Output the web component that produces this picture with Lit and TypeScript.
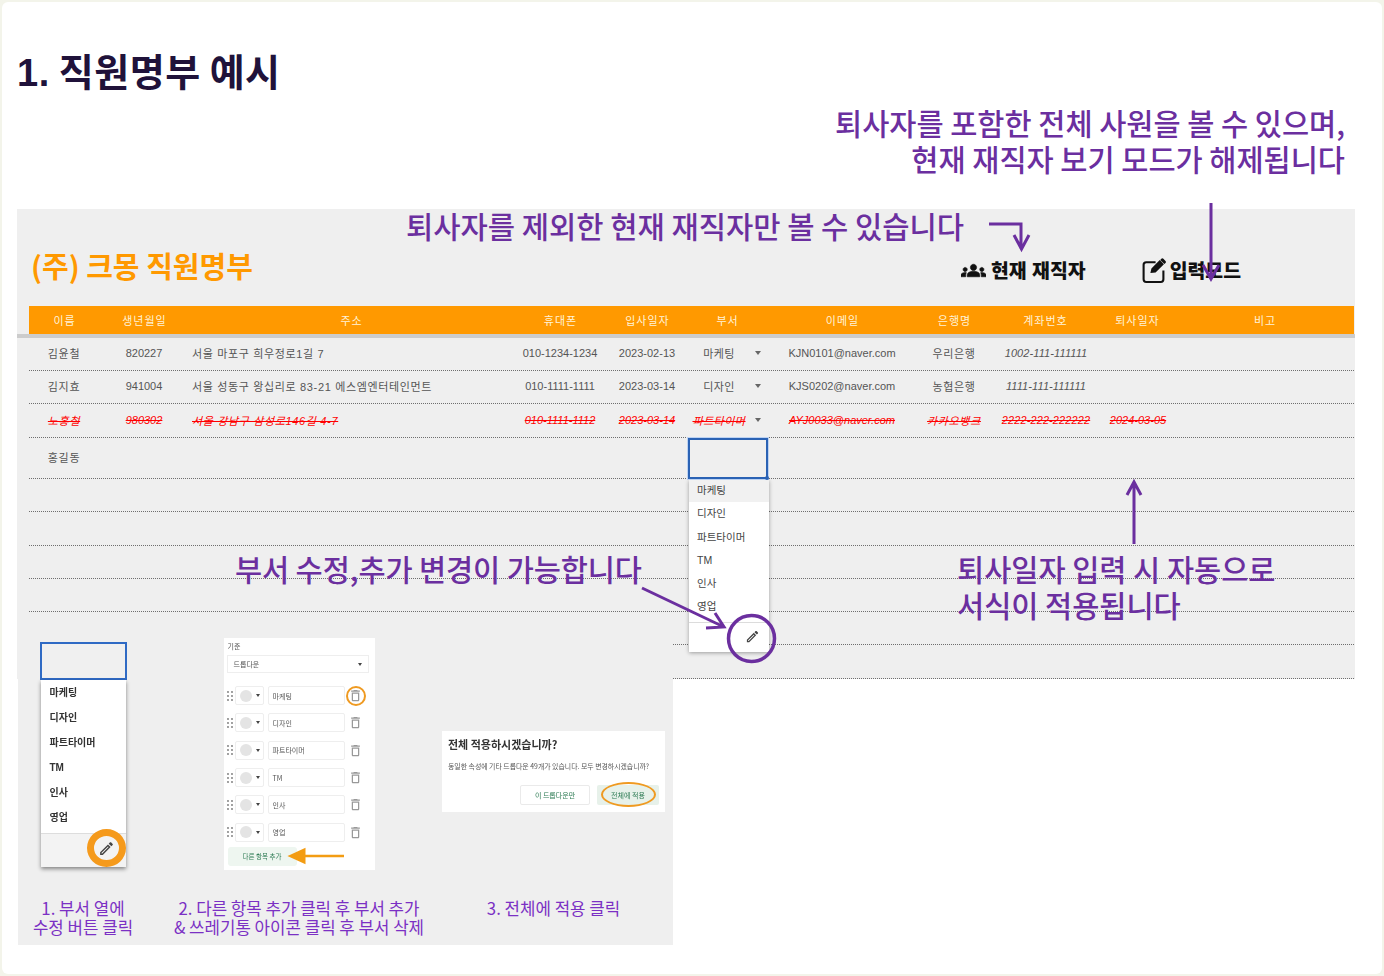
import { LitElement, html, css, svg } from "lit";
import { customElement } from "lit/decorators.js";

const COLS = ["이름", "생년월일", "주소", "휴대폰", "입사일자", "부서", "이메일", "은행명", "계좌번호", "퇴사일자", "비고"];

interface Row { h: number; cells?: string[]; gone?: boolean; name?: string; }
const ROWS: Row[] = [
  { h: 33, cells: ["김윤철", "820227", "서울 마포구 희우정로1길 7", "010-1234-1234", "2023-02-13", "마케팅", "KJN0101@naver.com", "우리은행", "1002-111-111111", ""] },
  { h: 33, cells: ["김지효", "941004", "서울 성동구 왕십리로 83-21 에스엠엔터테인먼트", "010-1111-1111", "2023-03-14", "디자인", "KJS0202@naver.com", "농협은행", "1111-111-111111", ""] },
  { h: 34, gone: true, cells: ["노홍철", "980302", "서울 강남구 삼성로146길 4-7", "010-1111-1112", "2023-03-14", "파트타이머", "AYJ0033@naver.com", "카카오뱅크", "2222-222-222222", "2024-03-05"] },
  { h: 41, name: "홍길동" },
  { h: 33 }, { h: 34 }, { h: 33 }, { h: 33 }, { h: 33 }, { h: 34 },
];
const DEPTS = ["마케팅", "디자인", "파트타이머", "TM", "인사", "영업"];

const PENCIL = "M3 17.25V21h3.75L17.81 9.94l-3.75-3.75L3 17.25zM5.92 19H5v-.92l9.06-9.06.92.92L5.92 19zM20.71 7.04c.39-.39.39-1.02 0-1.41l-2.34-2.34c-.2-.2-.45-.29-.71-.29s-.51.1-.7.29l-1.83 1.83 3.75 3.75 1.83-1.83z";
const TRASH = "M16 9v10H8V9h8m-1.5-6h-5l-1 1H5v2h14V4h-3.5l-1-1zM18 7H6v12c0 1.1.9 2 2 2h8c1.1 0 2-.9 2-2V7z";
const GROUPS = "M12 12.75c1.63 0 3.07.39 4.24.9 1.08.48 1.76 1.56 1.76 2.73V18H6v-1.61c0-1.18.68-2.26 1.76-2.73 1.17-.52 2.61-.91 4.24-.91zM4 13c1.1 0 2-.9 2-2s-.9-2-2-2-2 .9-2 2 .9 2 2 2zm1.13 1.1c-.37-.06-.74-.1-1.13-.1-.99 0-1.93.21-2.78.58C.48 14.9 0 15.62 0 16.43V18h4.5v-1.61c0-.83.23-1.61.63-2.29zM20 13c1.1 0 2-.9 2-2s-.9-2-2-2-2 .9-2 2 .9 2 2 2zm4 3.43c0-.81-.48-1.53-1.22-1.85-.85-.37-1.79-.58-2.78-.58-.39 0-.76.04-1.13.1.4.68.63 1.46.63 2.29V18H24v-1.57zM12 6c1.66 0 3 1.34 3 3s-1.34 3-3 3-3-1.34-3-3 1.34-3 3-3z";

const pencil = (cls: string) => html`<svg class=${cls} viewBox="0 0 24 24"><path d=${PENCIL}></path></svg>`;
const trash = html`<svg class="trash" viewBox="0 0 24 24"><path d=${TRASH}></path></svg>`;
const grip = html`<svg class="grip" viewBox="0 0 6 10"><g>${[1, 5, 9].flatMap((y) => [1, 5].map((x) => svg`<circle cx=${x} cy=${y} r="0.9"></circle>`))}</g></svg>`;

@customElement("app-root")
export class AppRoot extends LitElement {
  static styles = css`
    :host { display: block; width: 1384px; height: 976px; overflow: hidden; background: #f3f4ea;
      font-family: "Liberation Sans", "Noto Sans CJK KR", sans-serif; }
    .page { position: relative; box-sizing: border-box; width: 1380px; height: 972px; margin: 2px 0 0 2px; background: #fff; border-radius: 6px; padding: 0 0 0 15px; }
    h1 { margin: 0; height: 207px; padding-top: 49px; box-sizing: border-box; font: 700 38px/44px "Liberation Sans", "Noto Sans CJK KR", sans-serif; color: #20123a; letter-spacing: 0.5px; word-spacing: -2px; white-space: nowrap; }
    .sheet { width: 1338px; height: 470px; background: #efefef; }
    .sheet-head { height: 97px; box-sizing: border-box; display: flex; align-items: flex-start; }
    h2 { margin: 36px 0 0 14px; font: 700 29px/40px "Noto Sans CJK KR", sans-serif; color: #ff9900; white-space: nowrap; }
    .tools { margin: 48px 0 0 auto; display: flex; align-items: center; padding-right: 114px; font: 800 19.4px/26px "Noto Sans CJK KR", sans-serif; color: #111; }
    .tool { display: flex; align-items: center; white-space: nowrap; word-spacing: 1px; }
    .tool + .tool { margin-left: 55px; }
    .groups { width: 25px; height: 25px; margin-right: 5px; fill: #111; stroke: #111; stroke-width: 0.6; }
    .edit { width: 25px; height: 25px; margin-right: 4px; fill: #111; }
    .edit .o { fill: none; stroke: #111; stroke-width: 2; }
    .thead, .row { display: grid; grid-template-columns: 70px 90px 324px 94px 80px 80px 150px 74px 108px 76px 179px; width: 1325px; margin-left: 12px; align-items: center; text-align: center; }
    .thead { height: 28px; background: #ff9900; color: #fff3d8; font: 400 11px/26px "Noto Sans CJK KR", sans-serif; letter-spacing: 1px; text-indent: 1px; }
    .bar { height: 4px; background: #cccccc; }
    .row { box-sizing: border-box; padding-bottom: 2px; border-bottom: 1px dotted #6e6e6e; font-size: 11px; color: #555; }
    .row > span { white-space: nowrap; }
    .ko { letter-spacing: 0.65px; }
    .addr { text-align: left; padding-left: 3px; letter-spacing: 0.65px; }
    .dept { display: flex; align-items: center; justify-content: center; position: relative; padding-right: 16px; letter-spacing: 0.4px; }
    .caret { position: absolute; right: 6px; top: 50%; margin-top: -2px; border: 3px solid transparent; border-top: 4px solid #666; border-bottom: 0; }
    .acct { font-style: italic; letter-spacing: 0.1px; padding-left: 2px; }
    .quit { padding-left: 2px; }
    .gone { color: #ff0000; font-style: italic; text-decoration: line-through; }
    .gone .dept { text-decoration: line-through; }
    .picker { position: absolute; left: 686px; top: 436px; width: 82px; }
    .picked { box-sizing: border-box; width: 80px; height: 41px; border: 2px solid #2a62b4; background: #efefef; box-shadow: 0 0 0 1px #bcd2f2; position: relative; }
    .picked::after { content: ""; position: absolute; right: -3px; bottom: -3px; width: 4px; height: 4px; border-radius: 2px; background: #2a62b4; }
    .menu { width: 80px; margin-left: 1px; height: 172px; box-sizing: border-box; background: #fff; box-shadow: 0 2px 4px rgba(0,0,0,.35); font: 400 10.5px/23.3px "Liberation Sans", "Noto Sans CJK KR", sans-serif; color: #444; }
    .menu div { padding-left: 8px; }
    .menu div:first-child { background: #f1f1f1; }
    .menu .foot { height: 29px; padding: 0; background: #fff; border-top: 1px solid #dcdcdc; margin-top: 3px; display: flex; justify-content: flex-end; align-items: flex-start; }
    .pen-sm { width: 15px; height: 15px; fill: #444; margin: 6px 9px 0 0; }
    .lower { position: relative; width: 655px; height: 325px; margin: -59px 0 0 1px; background: #efefef; display: grid; grid-template-columns: 130px 302px 207px; grid-template-rows: 278px 1fr; justify-items: center; }
    .shot { filter: blur(0.35px); }
    .mini { margin-top: 22px; width: 87px; }
    .mini-box { box-sizing: border-box; height: 38px; border: 2px solid #2f6ac4; background: #f0f0f0; width: 87px; }
    .mini-menu { width: 85px; height: 187px; margin-left: 1px; background: #fff; box-shadow: 0 2px 4px rgba(0,0,0,.45); font: 700 10px/25px "Liberation Sans", "Noto Sans CJK KR", sans-serif; color: #333; position: relative; }
    .mini-menu div { padding-left: 9px; }
    .mini-foot { position: absolute; left: 0; right: 0; bottom: 0; height: 33px; padding: 0 !important; background: #f3f3f3; border-top: 1px solid #ddd; }
    .ring-big { position: absolute; right: 0; bottom: 0; box-sizing: border-box; width: 39px; height: 38px; border-radius: 50%; border: 7px solid #f59a1c; display: flex; align-items: center; justify-content: center; padding: 0 !important; background: #f3f3f3; }
    .pen-mid { width: 17px; height: 17px; fill: #444; }
    .card2 { position: relative; margin-top: 18px; width: 151px; height: 232px; box-sizing: border-box; background: #fff; padding: 3px 6px 0 3px; font: 400 7px/10px "Noto Sans CJK KR", sans-serif; color: #555; }
    .lbl { height: 14px; margin-left: 1px; }
    .sel { box-sizing: border-box; height: 18px; border: 1px solid #eee; display: flex; align-items: center; justify-content: space-between; padding: 0 6px; margin-bottom: 9px; }
    .tri { border: 2.5px solid transparent; border-top: 3px solid #444; border-bottom: 0; }
    .opt { display: flex; align-items: center; height: 27.3px; }
    .grip { width: 6px; height: 10px; fill: #777; margin-right: 2px; flex: none; }
    .sw { box-sizing: border-box; width: 29px; height: 19px; border: 1px solid #eee; border-radius: 2px; display: flex; align-items: center; padding-left: 4px; gap: 4px; }
    .dot { width: 12px; height: 12px; border-radius: 50%; background: #e4e4e4; }
    .inp { box-sizing: border-box; width: 77px; height: 19px; border: 1px solid #eee; border-radius: 2px; margin-left: 4px; padding-left: 4px; display: flex; align-items: center; }
    .trash { width: 15px; height: 15px; fill: #999; margin-left: 3px; flex: none; }
    .ring-sm { position: absolute; left: 122px; top: 48px; box-sizing: border-box; width: 20px; height: 20px; border-radius: 50%; border: 2.5px solid #ef9a21; }
    .add { position: absolute; left: 4px; top: 209px; width: 69px; height: 19px; border-radius: 3px; background: #eef6f0; color: #2b7a52; text-align: center; font-size: 6.5px; line-height: 19px; }
    .card3 { position: relative; margin-top: 111px; width: 223px; height: 81px; box-sizing: border-box; background: #fff; padding: 6px 6px 0; color: #444; font-family: "Noto Sans CJK KR", sans-serif; align-self: start; }
    .card3 b { display: block; font: 700 11px/15px "Noto Sans CJK KR", sans-serif; color: #333; white-space: nowrap; }
    .card3 p { margin: 10px 0 0; font-size: 6.9px; line-height: 9px; white-space: nowrap; color: #555; }
    .btns { display: flex; justify-content: flex-end; gap: 7px; margin-top: 14px; }
    .btn { width: 70px; height: 20px; box-sizing: border-box; border: 1px solid #eaeaea; border-radius: 2px; text-align: center; font-size: 7px; line-height: 18px; color: #2b7a52; }
    .btn.on { width: 62px; background: #e7f1ea; border: 0; line-height: 20px; position: relative; }
    .btn.on::after { content: ""; position: absolute; left: 4px; top: -3px; box-sizing: border-box; width: 55px; height: 25px; border: 2.5px solid #ef9a21; border-radius: 50%; }
    .cap { font: 400 16.8px/19px "Noto Sans CJK KR", sans-serif; color: #7b30c4; text-align: center; white-space: nowrap; padding-top: 1px; }
    .note { position: absolute; font: 500 29.5px/36px "Noto Sans CJK KR", sans-serif; color: #6b2f9f; white-space: nowrap; }
    .n1 { right: 37px; top: 102px; text-align: right; }
    .n2 { left: 404px; top: 206px; font-size: 29.65px; }
    .n3 { left: 233px; top: 548px; letter-spacing: -0.1px; }
    .n4 { left: 955px; top: 548px; }
    .lines { position: absolute; left: -2px; top: -2px; width: 1384px; height: 976px; fill: none; stroke: #6b2f9f; pointer-events: none; }
  `;

  private renderRow(r: Row) {
    const style = `height:${r.h}px`;
    if (r.name) return html`<div class="row" style=${style}><span class="ko">${r.name}</span></div>`;
    if (!r.cells) return html`<div class="row" style=${style}></div>`;
    const c = r.cells;
    return html`<div class="row ${r.gone ? "gone" : ""}" style=${style}>
      <span class="ko">${c[0]}</span><span>${c[1]}</span><span class="addr">${c[2]}</span><span>${c[3]}</span><span>${c[4]}</span>
      <span class="dept">${c[5]}<i class="caret"></i></span>
      <span>${c[6]}</span><span class="ko">${c[7]}</span><span class="acct">${c[8]}</span><span class="quit">${c[9]}</span><span></span>
    </div>`;
  }

  render() {
    return html`<div class="page">
      <h1>1. 직원명부 예시</h1>
      <section class="sheet">
        <div class="sheet-head">
          <h2>(주) 크몽 직원명부</h2>
          <div class="tools">
            <span class="tool"><svg class="groups" viewBox="0 0 24 24"><path d=${GROUPS}></path></svg>현재 재직자</span>
            <span class="tool"><svg class="edit" viewBox="0 0 24 24"><path class="o" d="M14 4H5a2.5 2.5 0 0 0-2.5 2.5v14A2.5 2.5 0 0 0 5 23h14a2.5 2.5 0 0 0 2.500-2.500V12"></path><path d="M9 14.500 10 10 18 2l4 4-8 8z M19.500 .8a1.500 1.500 0 0 1 2 0l2 2a1.500 1.500 0 0 1 0 2l-1 1-4-4z"></path></svg>입력모드</span>
          </div>
        </div>
        <div class="thead">${COLS.map((c) => html`<span>${c}</span>`)}</div>
        <div class="bar"></div>
        ${ROWS.map((r) => this.renderRow(r))}
      </section>

      <section class="lower">
        <div class="mini shot">
          <div class="mini-box"></div>
          <div class="mini-menu">
            ${DEPTS.map((d) => html`<div>${d}</div>`)}
            <div class="mini-foot"></div>
            <div class="ring-big">${pencil("pen-mid")}</div>
          </div>
        </div>
        <div class="card2 shot">
          <div class="lbl">기준</div>
          <div class="sel">드롭다운<i class="tri"></i></div>
          ${DEPTS.map((d) => html`<div class="opt">${grip}<div class="sw"><i class="dot"></i><i class="tri"></i></div><div class="inp">${d}</div>${trash}</div>`)}
          <div class="ring-sm"></div>
          <div class="add">다른 항목 추가</div>
        </div>
        <div class="card3 shot">
          <b>전체 적용하시겠습니까?</b>
          <p>동일한 속성에 기타 드롭다운 49개가 있습니다. 모두 변경하시겠습니까?</p>
          <div class="btns"><div class="btn">이 드롭다운만</div><div class="btn on">전체에 적용</div></div>
        </div>
        <div class="cap">1. 부서 열에<br />수정 버튼 클릭</div>
        <div class="cap">2. 다른 항목 추가 클릭 후 부서 추가<br />&amp; 쓰레기통 아이콘 클릭 후 부서 삭제</div>
        <div class="cap">3. 전체에 적용 클릭</div>
      </section>

      <div class="picker">
        <div class="picked"></div>
        <div class="menu">
          ${DEPTS.map((d) => html`<div>${d}</div>`)}
          <div class="foot">${pencil("pen-sm")}</div>
        </div>
      </div>

      <div class="note n1">퇴사자를 포함한 전체 사원을 볼 수 있으며,<br />현재 재직자 보기 모드가 해제됩니다</div>
      <div class="note n2">퇴사자를 제외한 현재 재직자만 볼 수 있습니다</div>
      <div class="note n3">부서 수정,추가 변경이 가능합니다</div>
      <div class="note n4">퇴사일자 입력 시 자동으로<br />서식이 적용됩니다</div>

      <svg class="lines" viewBox="0 0 1384 976" stroke-width="3">
        <path d="M989 224H1021V249M1014 235L1021.500 249L1029 235"></path>
        <path d="M1211 203V279M1203 265L1211 279L1219 265"></path>
        <path d="M1134 544V482M1127 495L1134 482L1141 495"></path>
        <path d="M642 588L724 627M706 628L724 627L715 613"></path>
        <circle cx="751.500" cy="638.500" r="23" stroke-width="3.500"></circle>
        <path d="M344 856H300" stroke="#f39c12" stroke-width="2.500"></path>
        <path d="M291 856L304 850V862Z" fill="#f39c12" stroke="#f39c12"></path>
      </svg>
    </div>`;
  }
}
